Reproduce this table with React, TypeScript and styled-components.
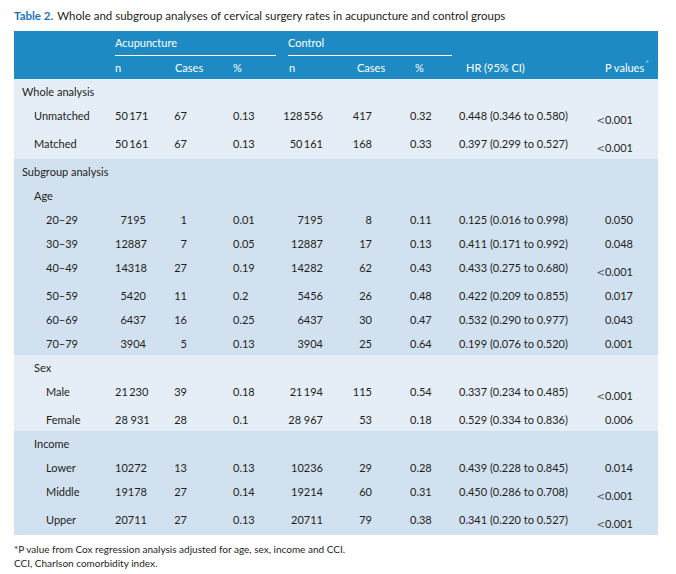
import styled, { createGlobalStyle } from "styled-components";

const GlobalStyle = createGlobalStyle`
  body {
    margin: 0;
    background: #fff;
  }
`;

const COLUMNS = "101px 35px 70px 60px 50px 70px 50px 130px 78px";

type Align = "left" | "right";
type ColSpec = { align: Align; pl?: number; pr?: number };

// where the numbers sit inside each value column
const VALUE_COLS: ColSpec[] = [
  { align: "right", pr: 4 },
  { align: "right", pr: 33 },
  { align: "left", pl: 13 },
  { align: "right", pr: 7 },
  { align: "right", pr: 28 },
  { align: "left", pl: 10 },
  { align: "left", pl: 9 },
  { align: "right", pr: 25 },
];

const HEAD_COLS: { text: string; pl: number }[] = [
  { text: "n", pl: 0 },
  { text: "Cases", pl: 25 },
  { text: "%", pl: 13 },
  { text: "n", pl: 9 },
  { text: "Cases", pl: 27 },
  { text: "%", pl: 15 },
  { text: "HR (95% CI)", pl: 16 },
];

type DataRow = {
  label: string;
  level: 0 | 1 | 2;
  values?: string[];
  p?: string;
  less?: boolean;
};

type Group = { tone: "light" | "dark"; rows: DataRow[] };

const GROUPS: Group[] = [
  {
    tone: "light",
    rows: [
      { label: "Whole analysis", level: 0 },
      {
        label: "Unmatched",
        level: 1,
        values: ["50\u2009171", "67", "0.13", "128\u2009556", "417", "0.32", "0.448 (0.346 to 0.580)"],
        p: "0.001",
        less: true,
      },
      {
        label: "Matched",
        level: 1,
        values: ["50\u2009161", "67", "0.13", "50\u2009161", "168", "0.33", "0.397 (0.299 to 0.527)"],
        p: "0.001",
        less: true,
      },
    ],
  },
  {
    tone: "dark",
    rows: [
      { label: "Subgroup analysis", level: 0 },
      { label: "Age", level: 1 },
      {
        label: "20–29",
        level: 2,
        values: ["7195", "1", "0.01", "7195", "8", "0.11", "0.125 (0.016 to 0.998)"],
        p: "0.050",
      },
      {
        label: "30–39",
        level: 2,
        values: ["12887", "7", "0.05", "12887", "17", "0.13", "0.411 (0.171 to 0.992)"],
        p: "0.048",
      },
      {
        label: "40–49",
        level: 2,
        values: ["14318", "27", "0.19", "14282", "62", "0.43", "0.433 (0.275 to 0.680)"],
        p: "0.001",
        less: true,
      },
      {
        label: "50–59",
        level: 2,
        values: ["5420", "11", "0.2", "5456", "26", "0.48", "0.422 (0.209 to 0.855)"],
        p: "0.017",
      },
      {
        label: "60–69",
        level: 2,
        values: ["6437", "16", "0.25", "6437", "30", "0.47", "0.532 (0.290 to 0.977)"],
        p: "0.043",
      },
      {
        label: "70–79",
        level: 2,
        values: ["3904", "5", "0.13", "3904", "25", "0.64", "0.199 (0.076 to 0.520)"],
        p: "0.001",
      },
    ],
  },
  {
    tone: "light",
    rows: [
      { label: "Sex", level: 1 },
      {
        label: "Male",
        level: 2,
        values: ["21\u2009230", "39", "0.18", "21\u2009194", "115", "0.54", "0.337 (0.234 to 0.485)"],
        p: "0.001",
        less: true,
      },
      {
        label: "Female",
        level: 2,
        values: ["28 931", "28", "0.1", "28 967", "53", "0.18", "0.529 (0.334 to 0.836)"],
        p: "0.006",
      },
    ],
  },
  {
    tone: "dark",
    rows: [
      { label: "Income", level: 1 },
      {
        label: "Lower",
        level: 2,
        values: ["10272", "13", "0.13", "10236", "29", "0.28", "0.439 (0.228 to 0.845)"],
        p: "0.014",
      },
      {
        label: "Middle",
        level: 2,
        values: ["19178", "27", "0.14", "19214", "60", "0.31", "0.450 (0.286 to 0.708)"],
        p: "0.001",
        less: true,
      },
      {
        label: "Upper",
        level: 2,
        values: ["20711", "27", "0.13", "20711", "79", "0.38", "0.341 (0.220 to 0.527)"],
        p: "0.001",
        less: true,
      },
    ],
  },
];

const Page = styled.div`
  width: 676px;
  height: 574px;
  box-sizing: border-box;
  padding: 9px 18px 0 14px;
  font-family: Lato, "Open Sans", sans-serif;
  font-size: 11px;
  line-height: 14px;
  color: #231f20;
  overflow: hidden;
`;

const Caption = styled.div`
  margin-bottom: 8px;
  font-size: 11.5px;
  white-space: nowrap;
`;

const CaptionLabel = styled.span`
  color: #1b75bb;
  font-weight: 700;
  margin-right: 4px;
`;

const Table = styled.div`
  width: 644px;
`;

const Head = styled.div`
  background: #1d8ac4;
  color: #fff;
`;

const Row = styled.div`
  display: grid;
  grid-template-columns: ${COLUMNS};
`;

const GroupHead = styled.div<{ $col: string; $ml: number; $mr: number }>`
  grid-column: ${(p) => p.$col};
  margin: 0 ${(p) => p.$mr}px 0 ${(p) => p.$ml}px;
  padding: 5px 0;
  border-bottom: 1px solid #fff;
  white-space: nowrap;
`;

const HeadCell = styled.div<{ $pl?: number; $pr?: number; $align?: Align }>`
  padding: 5px ${(p) => p.$pr ?? 0}px 4px ${(p) => p.$pl ?? 0}px;
  text-align: ${(p) => p.$align ?? "left"};
  white-space: nowrap;
`;

const Star = styled.sup`
  font-size: 9px;
  line-height: 0;
  color: #9fcdea;
  margin-left: 1px;
`;

const Band = styled.div<{ $tone: "light" | "dark" }>`
  background: ${(p) => (p.$tone === "light" ? "#e5edf6" : "#d2e1ef")};
`;

const LabelCell = styled.div<{ $level: number }>`
  padding: 6px 0 4px ${(p) => 8 + p.$level * 12}px;
  white-space: nowrap;
`;

const Cell = styled.div<{ $align: Align; $pl?: number; $pr?: number; $drop?: boolean }>`
  padding: ${(p) => (p.$drop ? 10 : 6)}px ${(p) => p.$pr ?? 0}px 4px
    ${(p) => p.$pl ?? 0}px;
  height: 14px;
  text-align: ${(p) => p.$align};
  white-space: nowrap;
`;

const Less = styled.span`
  font-family: "DejaVu Sans", sans-serif;
  font-size: 10px;
  line-height: 0;
  color: #555;
`;

const Footnote = styled.div`
  margin-top: 7px;
  font-size: 10px;
  white-space: nowrap;
`;

const App = () => {
  return (
    <>
      <GlobalStyle />
      <Page>
        <Caption>
          <CaptionLabel>Table 2.</CaptionLabel>
          Whole and subgroup analyses of cervical surgery rates in acupuncture
          and control groups
        </Caption>
        <Table>
          <Head>
            <Row>
              <GroupHead $col="2 / 5" $ml={0} $mr={4}>
                Acupuncture
              </GroupHead>
              <GroupHead $col="5 / 8" $ml={8} $mr={-2}>
                Control
              </GroupHead>
            </Row>
            <Row>
              <HeadCell />
              {HEAD_COLS.map((col, i) => (
                <HeadCell key={i} $pl={col.pl}>
                  {col.text}
                </HeadCell>
              ))}
              <HeadCell $pl={25}>
                P values<Star>*</Star>
              </HeadCell>
            </Row>
          </Head>
          {GROUPS.map((group, gi) => (
            <Band key={gi} $tone={group.tone}>
              {group.rows.map((row, ri) => (
                <Row key={ri}>
                  <LabelCell $level={row.level}>{row.label}</LabelCell>
                  {row.values?.map((v, ci) => (
                    <Cell
                      key={ci}
                      $align={VALUE_COLS[ci].align}
                      $pl={VALUE_COLS[ci].pl}
                      $pr={VALUE_COLS[ci].pr}
                    >
                      {v}
                    </Cell>
                  ))}
                  {row.p && (
                    <Cell
                      $align={VALUE_COLS[7].align}
                      $pr={VALUE_COLS[7].pr}
                      $drop={row.less}
                    >
                      {row.less && <Less>&lt;</Less>}
                      {row.p}
                    </Cell>
                  )}
                </Row>
              ))}
            </Band>
          ))}
        </Table>
        <Footnote>
          *P value from Cox regression analysis adjusted for age, sex, income
          and CCI.
          <br />
          CCI, Charlson comorbidity index.
        </Footnote>
      </Page>
    </>
  );
};

export default App;
